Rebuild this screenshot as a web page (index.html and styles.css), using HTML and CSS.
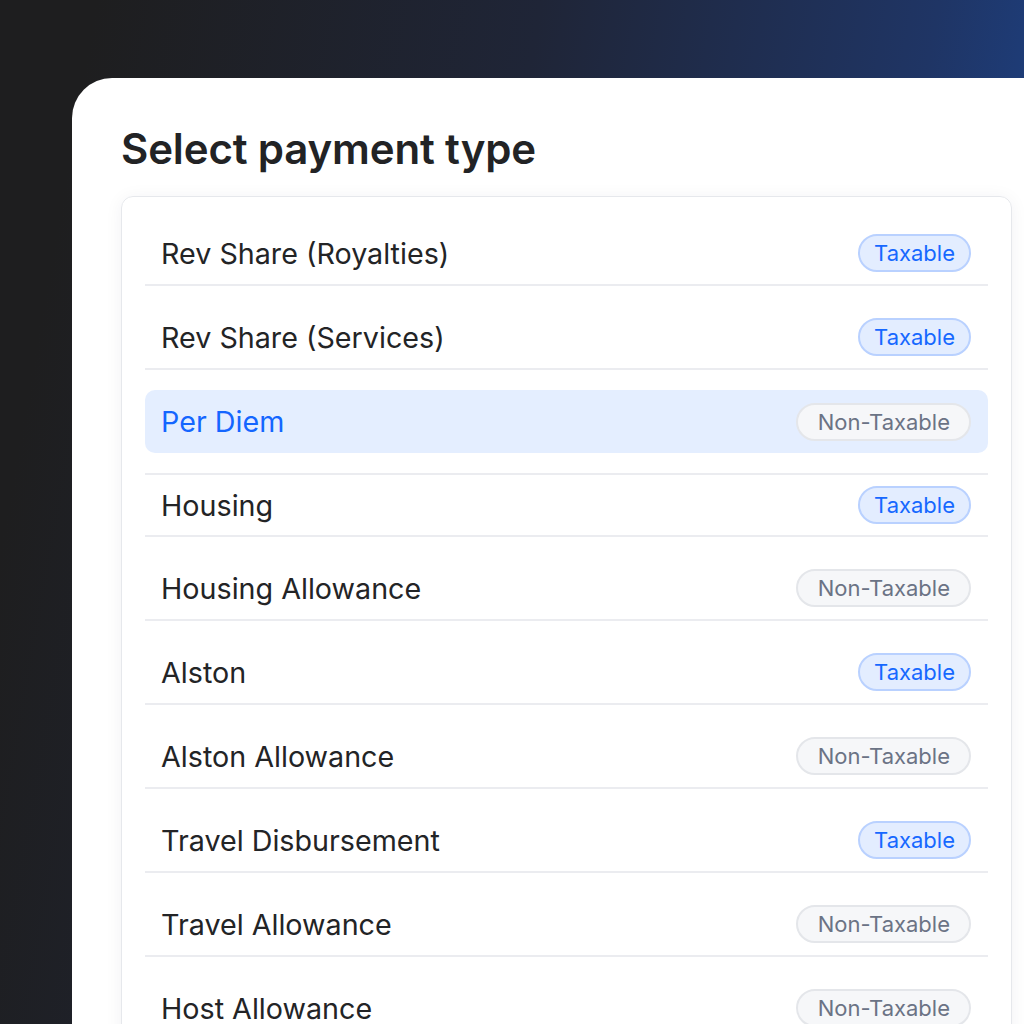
FILE: index.html
```html
<!DOCTYPE html>
<html lang="en">
<head>
    <meta charset="UTF-8">
    <meta name="viewport" content="width=device-width, initial-scale=1.0">
    <title>Select payment type</title>
    <link rel="stylesheet" href="styles.css">
</head>
<body>

    <div class="card">
        <h1 class="title">Select payment type</h1>

        <div class="list">
            <div class="row">
                <span class="name">Rev Share (Royalties)</span>
                <span class="badge taxable">Taxable</span>
            </div>
            <div class="row">
                <span class="name">Rev Share (Services)</span>
                <span class="badge taxable">Taxable</span>
            </div>
            <div class="row selected">
                <span class="name">Per Diem</span>
                <span class="badge">Non-Taxable</span>
            </div>
            <div class="row">
                <span class="name">Housing</span>
                <span class="badge taxable">Taxable</span>
            </div>
            <div class="row">
                <span class="name">Housing Allowance</span>
                <span class="badge">Non-Taxable</span>
            </div>
            <div class="row">
                <span class="name">Alston</span>
                <span class="badge taxable">Taxable</span>
            </div>
            <div class="row">
                <span class="name">Alston Allowance</span>
                <span class="badge">Non-Taxable</span>
            </div>
            <div class="row">
                <span class="name">Travel Disbursement</span>
                <span class="badge taxable">Taxable</span>
            </div>
            <div class="row">
                <span class="name">Travel Allowance</span>
                <span class="badge">Non-Taxable</span>
            </div>
            <div class="row">
                <span class="name">Host Allowance</span>
                <span class="badge">Non-Taxable</span>
            </div>
        </div>
    </div>

</body>
</html>
```

FILE: styles.css
```css
* {
    margin: 0;
    padding: 0;
    box-sizing: border-box;
    font-family: 'Inter', 'Noto Sans', sans-serif;
}

body {
    height: 100vh;
    overflow: hidden;
    background: linear-gradient(100deg, #1e1e1f 8%, #1f2537 45%, #1f3565 78%, #1c4794 100%);
}

/* Carte blanche */
.card {
    margin: 78px 0 0 72px;
    height: calc(100vh - 78px);
    overflow: hidden;
    background: #fff;
    border-top-left-radius: 40px;
    padding: 45px 0 0 49px;
}

.title {
    font-size: 42px;
    font-weight: 600;
    line-height: 51px;
    color: #222325;
    letter-spacing: -0.15px;
}

/* Liste */
.list {
    margin-top: 22px;
    width: 891px;
    border: 1.5px solid #e6e8ec;
    border-radius: 12px;
    padding: 25px 23px 40px;
    display: flex;
    flex-direction: column;
    gap: 20px;
    box-shadow: 0 2px 18px rgba(20, 30, 60, 0.06);
}

.row {
    flex-shrink: 0;
    height: 64px;
    padding: 0 17px 0 16px;
    display: flex;
    align-items: center;
    justify-content: space-between;
    border-bottom: 2px solid #ebecf0;
}

.row .name {
    font-size: 28.7px;
    color: #232426;
}

.row.selected {
    height: 63px;
    background: #e4eeff;
    border-bottom: none;
    border-radius: 10px;
}

.row.selected .name {
    color: #1466ff;
}

.row.selected + .row {
    border-top: 2px solid #ebecf0;
}

/* Badges */
.badge {
    height: 38px;
    padding: 0 19px 0 20px;
    display: flex;
    align-items: center;
    border-radius: 999px;
    font-size: 22px;
    color: #6b7385;
    background: #f6f7f9;
    border: 2px solid #e4e6ea;
}

.badge.taxable {
    padding: 0 14px 0 14px;
    color: #1668ff;
    background: #e3edff;
    border-color: #b9d1ff;
}
```
